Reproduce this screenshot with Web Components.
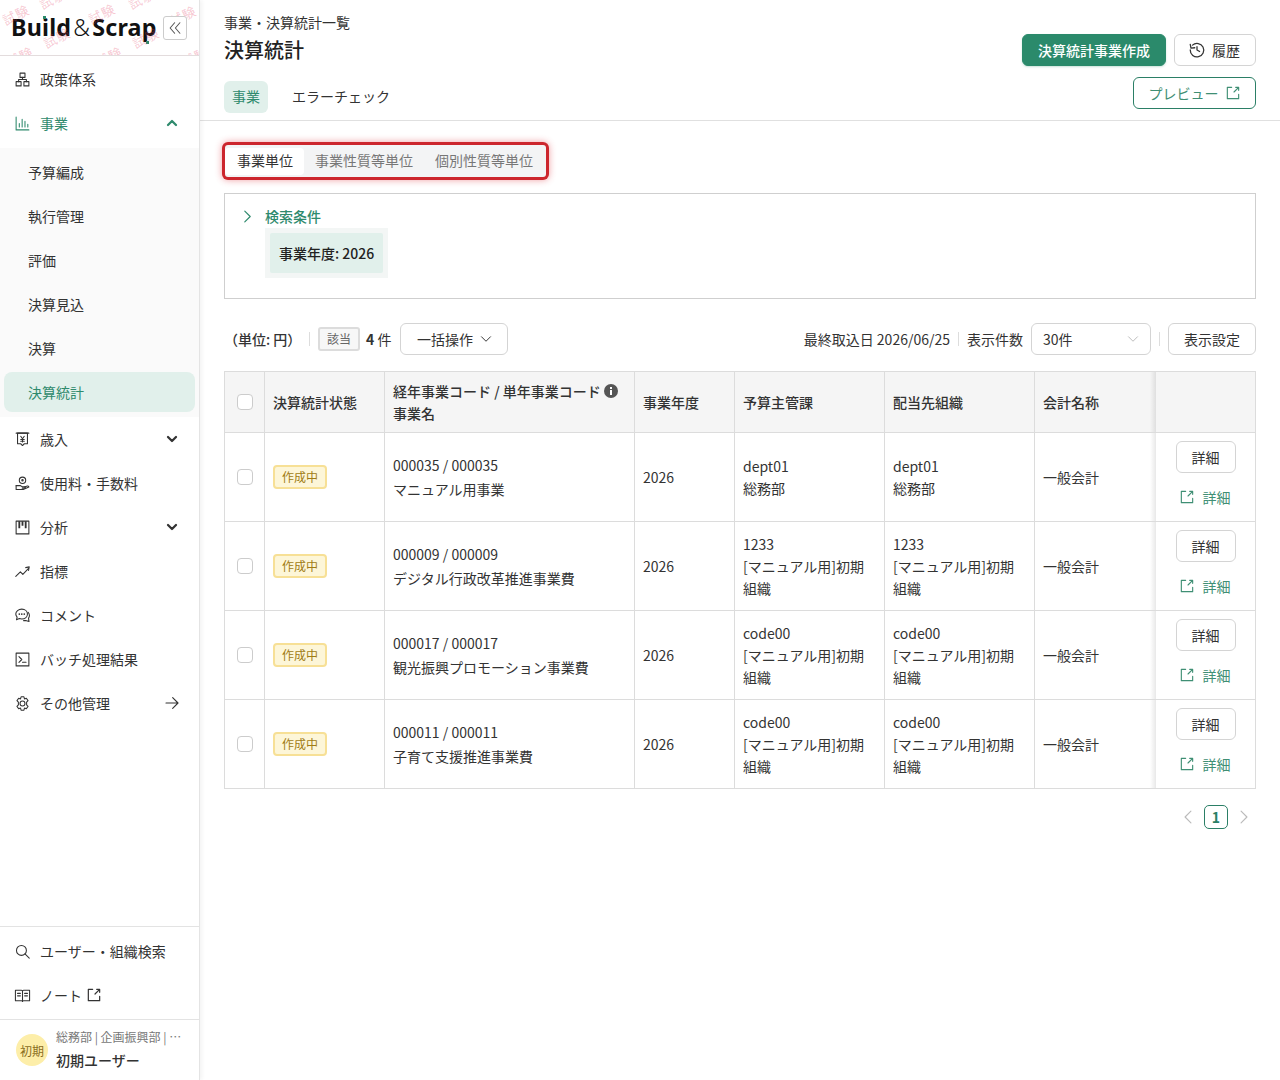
<!DOCTYPE html>
<html lang="ja">
<head>
<meta charset="utf-8">
<title>決算統計</title>
<style>
  html, body { margin: 0; height: 100%; }
  body {
    font-family: "Noto Sans CJK JP", "Noto Sans", sans-serif;
    font-size: 14px;
    color: #333;
    background: #fff;
    overflow: hidden;
  }
</style>
</head>
<body>
<app-shell>
  <side-bar slot="side">
    <nav-item icon="org" label="政策体系"></nav-item>
    <nav-item icon="chart" label="事業" active chevron="up"></nav-item>
    <nav-group>
      <sub-item>予算編成</sub-item>
      <sub-item>執行管理</sub-item>
      <sub-item>評価</sub-item>
      <sub-item>決算見込</sub-item>
      <sub-item>決算</sub-item>
      <sub-item active>決算統計</sub-item>
    </nav-group>
    <nav-item icon="yen" label="歳入" chevron="down"></nav-item>
    <nav-item icon="fee" label="使用料・手数料"></nav-item>
    <nav-item icon="kanban" label="分析" chevron="down"></nav-item>
    <nav-item icon="trend" label="指標"></nav-item>
    <nav-item icon="comment" label="コメント"></nav-item>
    <nav-item icon="terminal" label="バッチ処理結果"></nav-item>
    <nav-item icon="gear" label="その他管理" chevron="right"></nav-item>
    <nav-item slot="bottom" icon="search" label="ユーザー・組織検索"></nav-item>
    <nav-item slot="bottom" icon="book" label="ノート" external></nav-item>
  </side-bar>
  <page-header></page-header>
  <main-content>
    <seg-tabs></seg-tabs>
    <search-panel></search-panel>
    <list-toolbar></list-toolbar>
    <data-table></data-table>
    <page-nav></page-nav>
  </main-content>
</app-shell>

<script>
const ICONS = {
  org: '<rect x="8.500" y="3" width="7" height="6"/><rect x="3" y="15" width="7" height="6"/><rect x="14" y="15" width="7" height="6"/><path d="M12 9v3M6.500 15v-3h11v3"/>',
  chart: '<path d="M3 3v18h18"/><path d="M7.500 17v-5M11.500 17V6M15.500 17v-8M19.500 17v-4"/>',
  yen: '<path d="M5 3h14v15h-4.500L12 20.500 9.500 18H5z"/><path d="M3 3h18"/><path d="M9.500 7.500L12 11l2.500-3.500M12 11v4.500M9.500 12h5M9.500 14.500h5"/>',
  fee: '<circle cx="12" cy="7.500" r="4.500"/><circle cx="12" cy="7.500" r="1"/><path d="M3 15h6c1 0 1.500 1.500 3 1.500h3c1.500 0 1.500 2 0 2h-3.500"/><path d="M3 15v5.500h10l8-3.500c-.5-1.500-2-2-3.500-1.200L15 17"/>',
  kanban: '<rect x="3" y="3" width="18" height="18"/><path d="M7.500 3v10M12 3v6.500M16.500 3v10" stroke-width="2.600" stroke-linecap="butt"/>',
  trend: '<path d="M2.500 19l6.500-6.500 3.500 3.500 8-8.500"/><path d="M16.500 6.500l5-1-1 5"/>',
  comment: '<path d="M11 3c4.700 0 8 3 8 7s-3.300 7-8 7c-1.200 0-2.400-.2-3.400-.6L3.500 18l.9-3.800C3.200 13 2.500 11.600 2.500 10c0-4 3.800-7 8.500-7z"/><path d="M20 7.500c1.200 1.300 1.800 2.800 1.800 4.500 0 1.400-.5 2.700-1.300 3.700l.7 4.800-4.700-1.500c-1 .3-2 .3-3 .2"/><path d="M7.500 10h.01M11 10h.01M14.500 10h.01" stroke-width="2.400"/>',
  terminal: '<rect x="3" y="3" width="18" height="18"/><path d="M7 8l4 4-4 4M12 16h5"/>',
  gear: '<circle cx="12" cy="12" r="3.500"/><path d="M10 2.500h4l.8 3 2.600-1 2.400 3.500-2 2.200v3.600l2 2.200-2.400 3.500-2.600-1-.8 3h-4l-.8-3-2.600 1-2.400-3.500 2-2.200v-3.600l-2-2.200 2.400-3.500 2.600 1z"/>',
  search: '<circle cx="10.500" cy="10.500" r="7"/><path d="M15.500 15.500l6 6"/>',
  book: '<path d="M2 4.500h8.500c.8 0 1.500.5 1.500 1.500 0-1 .7-1.500 1.500-1.500H22v15h-8.500c-.8 0-1.500.5-1.500 1 0-.5-.7-1-1.500-1H2z"/><path d="M12 6v14M5 9h4M5 12.500h4M15 9h4M15 12.500h4"/>',
  external: '<path d="M10 3.500H3.500v17h17V14"/><path d="M13.500 10.500L20.500 3.500M16 3.500h4.500V8"/>',
  history: '<path d="M6 5.500A9 9 0 1 1 3 12"/><path d="M3 4.500l1 5 5-.5"/><path d="M12 7.500V12l3.500 2"/>',
  "chev-up": '<path d="M6 15l6-6 6 6"/>',
  "chev-down": '<path d="M6 9l6 6 6-6"/>',
  "chev-right": '<path d="M7 2l10 10L7 22"/>',
  "chev-left": '<path d="M17 2L7 12l10 10"/>',
  "arrow-right": '<path d="M3 12h18M13 4l8 8-8 8"/>',
  collapse: '<path d="M11.500 5l-6 7 6 7M18.500 5l-6 7 6 7"/>'
};

class XIcon extends HTMLElement {
  connectedCallback() {
    const name = this.getAttribute("name");
    const size = this.getAttribute("size") || 16;
    const width = this.getAttribute("stroke") || 2;
    const root = this.shadowRoot || this.attachShadow({ mode: "open" });
    root.innerHTML = `
      <style>
        :host { display: inline-flex; flex: none; width: ${size}px; height: ${size}px; }
        svg { width: 100%; height: 100%; fill: none; stroke: currentColor; stroke-width: ${width}; stroke-linecap: round; stroke-linejoin: round; }
      </style>
      <svg viewBox="0 0 24 24">${ICONS[name] || ""}</svg>`;
  }
}
customElements.define("x-icon", XIcon);

function shadow(el, html) {
  const root = el.attachShadow({ mode: "open" });
  root.innerHTML = html;
  return root;
}

class AppShell extends HTMLElement {
  constructor() {
    super();
    shadow(this, `
      <style>
        :host { display: flex; height: 1080px; width: 1280px; }
        .main { flex: 1; min-width: 0; display: flex; flex-direction: column; }
      </style>
      <slot name="side"></slot>
      <div class="main"><slot></slot></div>`);
  }
}
customElements.define("app-shell", AppShell);

class SideBar extends HTMLElement {
  constructor() {
    super();
    const stamps = [[16,15],[102,14],[183,16],[57,38],[146,38],[20,57],[109,57],[195,57],[53,-1],[142,-1]]
      .map(p => `<span style="left:${p[0]}px;top:${p[1]}px">試験</span>`).join("");
    shadow(this, `
      <style>
        :host {
          display: flex; flex-direction: column; flex: none; box-sizing: border-box;
          width: 200px; height: 1080px; background: #fff;
          border-right: 1px solid #e4e4e4; box-shadow: 2px 0 4px rgba(0,0,0,.05);
          position: relative; z-index: 1;
        }
        .head {
          position: relative; overflow: hidden; height: 55px; flex: none;
          border-bottom: 1px solid #e3dcdd; display: flex; align-items: center;
          padding-left: 12px; gap: 6px;
        }
        .stamps { position: absolute; inset: 0; pointer-events: none; }
        .stamps span {
          position: absolute; font-size: 13px; line-height: 14px; color: rgba(228,70,105,.3);
          transform: translate(-50%, -50%) rotate(-27deg); white-space: nowrap; letter-spacing: 1px;
        }
        .logo {
          font: 700 23.300px/30px "Noto Sans", sans-serif; color: #111; letter-spacing: .2px;
          white-space: nowrap; width: 145px; margin-top: -1px; margin-left: -1px; margin-right: 1px;
        }
        .logo i { font-style: normal; font-weight: 300; padding: 0 2px; }
        .dot { position: absolute; width: 3px; height: 3px; background: #2b8a6b; }
        .collapse {
          position: relative; width: 22px; height: 22px; border: 1px solid #ccc; border-radius: 3px; background: #fff;
          display: flex; align-items: center; justify-content: center; color: #555; margin-top: 1px;
        }
        .nav { flex: 1; padding-top: 1px; }
        .bottom { flex: none; border-top: 1px solid #e3e3e3; padding: 2px 0; height: 88px; }
        .user {
          flex: none; height: 60px; border-top: 1px solid #e3e3e3; display: flex; align-items: center;
          padding-left: 16px; gap: 8px;
        }
        .avatar {
          width: 32px; height: 32px; border-radius: 50%; background: #fdeea9; color: #8a6d1d;
          font-size: 12px; display: flex; align-items: center; justify-content: center; flex: none;
        }
        .org { font-size: 12px; line-height: 18px; color: #777; white-space: nowrap; }
        .name { font-size: 14px; line-height: 22px; font-weight: 500; color: #333; margin-top: 3px; margin-bottom: 1px; }
      </style>
      <div class="head">
        <div class="logo">Build<i>&amp;</i>Scrap</div>
        <span class="dot" style="left:43px;top:16px"></span>
        <span class="dot" style="left:146px;top:41px"></span>
        <div class="stamps">${stamps}</div>
        <div class="collapse"><x-icon name="collapse" size="18" stroke="1.400"></x-icon></div>
      </div>
      <div class="nav"><slot></slot></div>
      <div class="bottom"><slot name="bottom"></slot></div>
      <div class="user">
        <div class="avatar">初期</div>
        <div>
          <div class="org">総務部 | 企画振興部 | ⋯</div>
          <div class="name">初期ユーザー</div>
        </div>
      </div>`);
  }
}
customElements.define("side-bar", SideBar);

class NavItem extends HTMLElement {
  connectedCallback() {
    if (this.shadowRoot) return;
    const active = this.hasAttribute("active");
    const chevron = this.getAttribute("chevron");
    const right = { up: "chev-up", down: "chev-down", right: "arrow-right" }[chevron];
    const bold = chevron === "up" || chevron === "down";
    shadow(this, `
      <style>
        :host {
          display: flex; align-items: center; height: 44px; padding: 0 19px 0 14px;
          color: ${active ? "#2f8a6d" : "#333"}; font-size: 14px;
        }
        .label { margin-left: 9px; flex: 1; display: flex; align-items: center; gap: 4px; white-space: nowrap; }
      </style>
      <x-icon name="${this.getAttribute("icon")}" size="17" stroke="1.500"></x-icon>
      <span class="label">${this.getAttribute("label")}${this.hasAttribute("external") ? '<x-icon name="external" size="16" stroke="1.800"></x-icon>' : ""}</span>
      ${right ? `<x-icon name="${right}" size="16" stroke="${bold ? 3.400 : 1.700}"></x-icon>` : ""}`);
  }
}
customElements.define("nav-item", NavItem);

class NavGroup extends HTMLElement {
  constructor() {
    super();
    shadow(this, `<style>:host { display: block; background: #fafafa; margin-top: 3px; padding: 2px 0 3px; }</style><slot></slot>`);
  }
}
customElements.define("nav-group", NavGroup);

class SubItem extends HTMLElement {
  connectedCallback() {
    if (this.shadowRoot) return;
    const active = this.hasAttribute("active");
    shadow(this, `
      <style>
        :host {
          display: flex; align-items: center; box-sizing: border-box;
          height: ${active ? 40 : 44}px; margin: ${active ? "2px 4px" : "0 4px"}; padding-left: 24px; border-radius: 8px;
          background: ${active ? "#e1f0eb" : "transparent"}; color: ${active ? "#2f8a6d" : "#333"};
        }
      </style><slot></slot>`);
  }
}
customElements.define("sub-item", SubItem);

class PageHeader extends HTMLElement {
  constructor() {
    super();
    shadow(this, `
      <style>
        :host {
          display: flex; justify-content: space-between; box-sizing: border-box; flex: none;
          height: 121px; padding: 12px 24px 0; border-bottom: 1px solid #e0e0e0;
        }
        .crumb { font-size: 14px; line-height: 20px; }
        h1 { margin: 4px 0 0; font-size: 20px; line-height: 28px; font-weight: 500; color: #222; }
        .tabs { display: flex; gap: 16px; margin-top: 17px; }
        .tab { height: 32px; line-height: 30px; padding: 0 8px; border-radius: 6px; }
        .tab.on { background: #e1f0eb; color: #2f8a6d; }
        .actions { display: flex; flex-direction: column; align-items: flex-end; gap: 11px; padding-top: 22px; }
        .row { display: flex; gap: 8px; }
        .btn {
          display: flex; align-items: center; justify-content: center; gap: 8px; box-sizing: border-box;
          height: 32px; border-radius: 6px; border: 1px solid #d4d4d4; background: #fff; color: #333; white-space: nowrap;
        }
        .primary { width: 144px; background: #2b8a6b; border-color: #2b8a6b; color: #fff; font-weight: 500; box-shadow: 0 1px 2px rgba(43,138,107,.25); }
        .hist { width: 82px; justify-content: flex-start; padding-left: 13px; gap: 6px; }
        .preview { width: 123px; gap: 6px; border-color: #2b7f66; color: #3f8f74; }
      </style>
      <div>
        <div class="crumb">事業・決算統計一覧</div>
        <h1>決算統計</h1>
        <div class="tabs"><div class="tab on">事業</div><div class="tab">エラーチェック</div></div>
      </div>
      <div class="actions">
        <div class="row">
          <div class="btn primary">決算統計事業作成</div>
          <div class="btn hist"><x-icon name="history" size="18" stroke="1.700"></x-icon>履歴</div>
        </div>
        <div class="btn preview">プレビュー<x-icon name="external" size="16" stroke="1.700"></x-icon></div>
      </div>`);
  }
}
customElements.define("page-header", PageHeader);

class MainContent extends HTMLElement {
  constructor() {
    super();
    shadow(this, `<style>:host { display: block; padding: 24px 24px 0; flex: 1; }</style><slot></slot>`);
  }
}
customElements.define("main-content", MainContent);

class SegTabs extends HTMLElement {
  constructor() {
    super();
    shadow(this, `
      <style>
        :host {
          display: flex; align-items: flex-start; box-sizing: border-box; width: 321px; height: 32px; margin-left: 1px;
          background: #f3f4f5; border-radius: 3px;
          box-shadow: 0 0 0 3px #cc262d, 0 0 7px 3px rgba(220,40,50,.45);
        }
        div { height: 27px; line-height: 25px; margin-top: 3px; color: #777; white-space: nowrap; }
        .on { background: #fff; color: #333; padding: 0 11px 0 12px; border-radius: 4px; }
        .mid { margin-left: 11px; }
        .last { margin-left: 22px; }
      </style>
      <div class="on">事業単位</div><div class="mid">事業性質等単位</div><div class="last">個別性質等単位</div>`);
  }
}
customElements.define("seg-tabs", SegTabs);

class SearchPanel extends HTMLElement {
  constructor() {
    super();
    shadow(this, `
      <style>
        :host { display: block; box-sizing: border-box; height: 106px; margin-top: 16px; border: 1px solid #cfcfcf; padding: 11px 0 0 16px; }
        .title { display: flex; align-items: center; gap: 11px; height: 22px; margin-bottom: 1px; color: #2f8a6d; font-weight: 500; }
        .wrap { display: inline-block; margin: 0 0 0 24px; padding: 5px; background: #f3f6f5; }
        .chip { height: 40px; line-height: 40px; padding: 0 9px; background: #e1f0eb; color: #222; font-weight: 500; border-radius: 2px; }
      </style>
      <div class="title"><x-icon name="chev-right" size="13" stroke="2.200"></x-icon><span>検索条件</span></div>
      <div class="wrap"><div class="chip">事業年度: 2026</div></div>`);
  }
}
customElements.define("search-panel", SearchPanel);

class ListToolbar extends HTMLElement {
  constructor() {
    super();
    shadow(this, `
      <style>
        :host { display: flex; justify-content: space-between; align-items: center; height: 32px; margin-top: 24px; white-space: nowrap; }
        .group { display: flex; align-items: center; }
        .sep { width: 1px; height: 14px; background: #ddd; }
        .tag {
          box-sizing: border-box; width: 42px; height: 24px; line-height: 20px; text-align: center; font-size: 12px; color: #666;
          background: #f7f7f7; border: 2px solid #dcdcdc; border-radius: 3px;
        }
        b { font-weight: 700; }
        .btn {
          display: flex; align-items: center; box-sizing: border-box; height: 32px;
          border: 1px solid #d4d4d4; border-radius: 6px; background: #fff;
        }
      </style>
      <div class="group">
        <span style="width:85px;font-weight:500">（単位: 円）</span>
        <span class="sep"></span>
        <span class="tag" style="margin-left:8px">該当</span>
        <span style="margin-left:6px;width:26px"><b>4</b> 件</span>
        <div class="btn" style="margin-left:8px;width:108px;padding-left:16px;gap:4px">一括操作<x-icon name="chev-down" size="18" stroke="1.300"></x-icon></div>
      </div>
      <div class="group">
        <span>最終取込日 2026/06/25</span>
        <span class="sep" style="margin:0 8px"></span>
        <span>表示件数</span>
        <div class="btn" style="margin-left:8px;width:120px;padding:0 8px 0 11px;justify-content:space-between">30件<x-icon name="chev-down" size="18" stroke="1.300" style="color:#bbb"></x-icon></div>
        <span class="sep" style="margin:0 8px"></span>
        <div class="btn" style="width:88px;justify-content:center">表示設定</div>
      </div>`);
  }
}
customElements.define("list-toolbar", ListToolbar);

class StatusBadge extends HTMLElement {
  constructor() {
    super();
    shadow(this, `
      <style>
        :host {
          display: inline-block; box-sizing: border-box; width: 54px; height: 24px; line-height: 20px; text-align: center;
          font-size: 12px; color: #a07c14; background: #fdf6d8; border: 2px solid #f7e096; border-radius: 4px;
        }
      </style><slot></slot>`);
  }
}
customElements.define("status-badge", StatusBadge);

const ROWS = [
  { code: "000035 / 000035", name: "マニュアル用事業", budget: ["dept01", "総務部"], org: ["dept01", "総務部"] },
  { code: "000009 / 000009", name: "デジタル行政改革推進事業費", budget: ["1233", "[マニュアル用]初期", "組織"], org: ["1233", "[マニュアル用]初期", "組織"] },
  { code: "000017 / 000017", name: "観光振興プロモーション事業費", budget: ["code00", "[マニュアル用]初期", "組織"], org: ["code00", "[マニュアル用]初期", "組織"] },
  { code: "000011 / 000011", name: "子育て支援推進事業費", budget: ["code00", "[マニュアル用]初期", "組織"], org: ["code00", "[マニュアル用]初期", "組織"] }
];

class DataTable extends HTMLElement {
  constructor() {
    super();
    const lines = a => a.map(t => `<div>${t}</div>`).join("");
    const body = ROWS.map(r => `
      <tr>
        <td class="c"><span class="check"></span></td>
        <td><status-badge>作成中</status-badge></td>
        <td><div class="code">${r.code}</div><div class="code">${r.name}</div></td>
        <td>2026</td>
        <td>${lines(r.budget)}</td>
        <td>${lines(r.org)}</td>
        <td class="before-act">一般会計</td>
        <td class="act">
          <div class="detail">詳細</div>
          <div class="link"><x-icon name="external" size="16" stroke="1.700"></x-icon>詳細</div>
        </td>
      </tr>`).join("");
    shadow(this, `
      <style>
        :host { display: block; margin-top: 16px; }
        table { border-collapse: collapse; table-layout: fixed; width: 1031px; line-height: 22px; }
        th, td { border: 1px solid #dcdcdc; padding: 0 8px; text-align: left; vertical-align: middle; }
        th { background: #f5f5f5; font-weight: 500; height: 60px; color: #333; }
        td { height: 88px; }
        .c { padding: 0; }
        .check { display: block; box-sizing: border-box; width: 16px; height: 16px; margin: 0 auto; border: 1px solid #ccc; border-radius: 4px; background: #fff; }
        .code { line-height: 24px; }
        .info { display: inline-block; width: 14px; height: 14px; vertical-align: -1px; color: #555; }
        .info svg { display: block; width: 14px; height: 14px; }
        .before-act { border-right-style: hidden; }
        .act, .shadow { position: relative; border-left-style: hidden; }
        .act { height: 80px; padding: 8px 0 0; vertical-align: top; }
        .act::before, .shadow::before {
          content: ""; position: absolute; left: -6px; top: 0; bottom: 0; width: 6px;
          background: linear-gradient(to right, rgba(0,0,0,0), rgba(0,0,0,.09));
        }
        .detail { box-sizing: border-box; width: 60px; height: 32px; line-height: 30px; margin-left: 20px; text-align: center; border: 1px solid #d4d4d4; border-radius: 6px; background: #fff; }
        .link { display: flex; align-items: center; gap: 8px; margin-top: 13px; padding-left: 23px; color: #3f8f74; }
      </style>
      <table>
        <colgroup><col style="width:40px"><col style="width:120px"><col style="width:250px"><col style="width:100px"><col style="width:150px"><col style="width:150px"><col style="width:121px"><col style="width:100px"></colgroup>
        <thead><tr>
          <th class="c"><span class="check"></span></th>
          <th>決算統計状態</th>
          <th>経年事業コード / 単年事業コード <span class="info"><svg viewBox="0 0 14 14"><circle cx="7" cy="7" r="7" fill="currentColor"/><rect x="6" y="6" width="2" height="5" fill="#fff"/><rect x="6" y="3" width="2" height="2" fill="#fff"/></svg></span><br>事業名</th>
          <th>事業年度</th>
          <th>予算主管課</th>
          <th>配当先組織</th>
          <th class="before-act">会計名称</th>
          <th class="shadow"></th>
        </tr></thead>
        <tbody>${body}</tbody>
      </table>`);
  }
}
customElements.define("data-table", DataTable);

class PageNav extends HTMLElement {
  constructor() {
    super();
    shadow(this, `
      <style>
        :host { display: flex; justify-content: flex-end; align-items: center; gap: 9px; margin-top: 16px; padding-right: 5px; color: #bbb; }
        .cur {
          box-sizing: border-box; width: 24px; height: 24px; line-height: 22px; text-align: center;
          border: 1px solid #2b7f66; border-radius: 5px; color: #2b7f66; font-weight: 700;
        }
      </style>
      <x-icon name="chev-left" size="14" stroke="2"></x-icon>
      <div class="cur">1</div>
      <x-icon name="chev-right" size="14" stroke="2"></x-icon>`);
  }
}
customElements.define("page-nav", PageNav);
</script>
</body>
</html>
